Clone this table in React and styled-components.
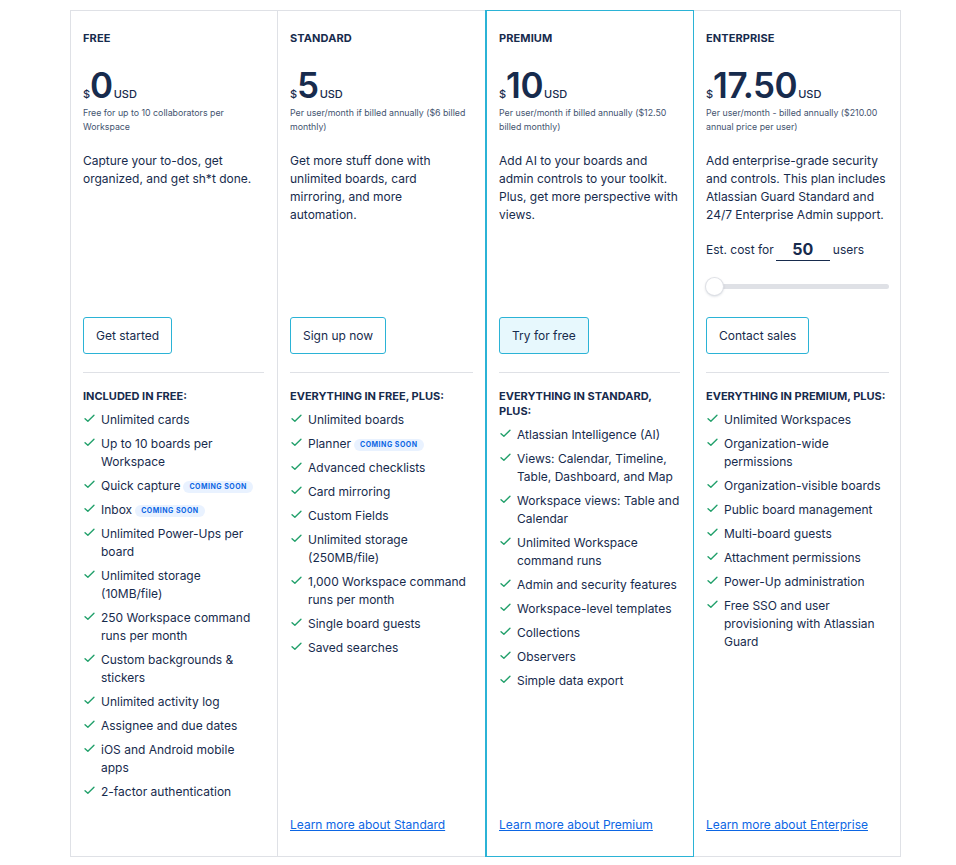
import React from 'react';
import styled, { createGlobalStyle } from 'styled-components';

const GlobalStyle = createGlobalStyle`
  body {
    margin: 0;
    background: #fff;
    font-family: 'Inter', 'Noto Sans', sans-serif;
    color: #172B4D;
  }
`;

const plans = [
  {
    name: 'FREE',
    price: '0',
    note: 'Free for up to 10 collaborators per Workspace',
    desc: 'Capture your to-dos, get organized, and get sh*t done.',
    cta: 'Get started',
    heading: 'INCLUDED IN FREE:',
    features: [
      'Unlimited cards',
      'Up to 10 boards per Workspace',
      ['Quick capture', true],
      ['Inbox', true],
      'Unlimited Power-Ups per board',
      'Unlimited storage (10MB/file)',
      '250 Workspace command runs per month',
      'Custom backgrounds & stickers',
      'Unlimited activity log',
      'Assignee and due dates',
      'iOS and Android mobile apps',
      '2-factor authentication',
    ],
  },
  {
    name: 'STANDARD',
    price: '5',
    note: 'Per user/month if billed annually ($6 billed monthly)',
    desc: 'Get more stuff done with unlimited boards, card mirroring, and more automation.',
    cta: 'Sign up now',
    heading: 'EVERYTHING IN FREE, PLUS:',
    features: [
      'Unlimited boards',
      ['Planner', true],
      'Advanced checklists',
      'Card mirroring',
      'Custom Fields',
      'Unlimited storage (250MB/file)',
      '1,000 Workspace command runs per month',
      'Single board guests',
      'Saved searches',
    ],
    link: 'Learn more about Standard',
  },
  {
    name: 'PREMIUM',
    price: '10',
    note: 'Per user/month if billed annually ($12.50 billed monthly)',
    desc: 'Add AI to your boards and admin controls to your toolkit. Plus, get more perspective with views.',
    cta: 'Try for free',
    featured: true,
    heading: 'EVERYTHING IN STANDARD, PLUS:',
    features: [
      'Atlassian Intelligence (AI)',
      'Views: Calendar, Timeline, Table, Dashboard, and Map',
      'Workspace views: Table and Calendar',
      'Unlimited Workspace command runs',
      'Admin and security features',
      'Workspace-level templates',
      'Collections',
      'Observers',
      'Simple data export',
    ],
    link: 'Learn more about Premium',
  },
  {
    name: 'ENTERPRISE',
    price: '17.50',
    note: 'Per user/month - billed annually ($210.00 annual price per user)',
    desc: 'Add enterprise-grade security and controls. This plan includes Atlassian Guard Standard and 24/7 Enterprise Admin support.',
    cta: 'Contact sales',
    estimate: true,
    heading: 'EVERYTHING IN PREMIUM, PLUS:',
    features: [
      'Unlimited Workspaces',
      'Organization-wide permissions',
      'Organization-visible boards',
      'Public board management',
      'Multi-board guests',
      'Attachment permissions',
      'Power-Up administration',
      'Free SSO and user provisioning with Atlassian Guard',
    ],
    link: 'Learn more about Enterprise',
  },
];

function Check() {
  return (
    <CheckIcon viewBox="0 0 16 16" fill="none">
      <path d="M2.5 8.2 L6 11.5 L13.5 4" stroke="#22A06B" strokeWidth="1.7" strokeLinecap="round" strokeLinejoin="round" />
    </CheckIcon>
  );
}

export default function App() {
  return (
    <>
      <GlobalStyle />
      <Page>
        <Table>
          {plans.map((p) => (
            <Card key={p.name} $featured={p.featured}>
              <Top>
                <PlanName>{p.name}</PlanName>
                <Price>
                  <Dollar>$</Dollar>
                  <Amount>{p.price}</Amount>
                  <Currency>USD</Currency>
                </Price>
                <Note>{p.note}</Note>
                <Desc>{p.desc}</Desc>
                {p.estimate && (
                  <>
                    <Estimate>
                      Est. cost for <UsersInput>50</UsersInput> users
                    </Estimate>
                    <Slider>
                      <Thumb />
                    </Slider>
                  </>
                )}
                <Spacer />
                <CtaButton $featured={p.featured}>{p.cta}</CtaButton>
              </Top>
              <Divider />
              <Heading>{p.heading}</Heading>
              <Features>
                {p.features.map((f) => {
                  const text = Array.isArray(f) ? f[0] : f;
                  const soon = Array.isArray(f);
                  return (
                    <Feature key={text}>
                      <Check />
                      <span>
                        {text}
                        {soon && <Badge>COMING SOON</Badge>}
                      </span>
                    </Feature>
                  );
                })}
              </Features>
              <LinkSlot>
                {p.link && <LearnMore href="#">{p.link}</LearnMore>}
              </LinkSlot>
            </Card>
          ))}
        </Table>
      </Page>
    </>
  );
}

const Page = styled.div`
  padding: 10px 55px 8px 70px;
`;

const Table = styled.div`
  display: grid;
  grid-template-columns: 206px 209px 207px 209px;
  border: 1px solid #DFE1E6;
`;

const Card = styled.div`
  display: flex;
  flex-direction: column;
  padding: 19px 13px 22px 12px;
  border-left: 1px solid ${(p) => (p.$featured ? '#2BB3D6' : '#DFE1E6')};
  outline: ${(p) => (p.$featured ? '1px solid #2BB3D6' : 'none')};
  position: relative;
  z-index: ${(p) => (p.$featured ? 1 : 0)};
  &:first-child {
    border-left: none;
  }
`;

const Top = styled.div`
  display: flex;
  flex-direction: column;
  height: 324px;
`;

const PlanName = styled.div`
  font-size: 11px;
  font-weight: 700;
  line-height: 16px;
  letter-spacing: 0.1px;
`;

const Price = styled.div`
  display: flex;
  align-items: baseline;
  margin-top: 19px;
  height: 40px;
`;

const Dollar = styled.span`
  font-size: 11px;
  font-weight: 500;
`;

const Amount = styled.span`
  font-size: 35px;
  font-weight: 600;
  letter-spacing: -0.5px;
  line-height: 40px;
`;

const Currency = styled.span`
  font-size: 11px;
  font-weight: 500;
  margin-left: 1px;
`;

const Note = styled.div`
  font-size: 8.8px;
  line-height: 14px;
  color: #44546F;
  margin-top: 1px;
`;

const Desc = styled.p`
  margin: 18px 0 0;
  max-width: 181px;
  font-size: 12px;
  line-height: 18px;
`;

const Estimate = styled.div`
  display: flex;
  align-items: center;
  margin-top: 14px;
  font-size: 12px;
  line-height: 22px;
`;

const UsersInput = styled.span`
  display: inline-block;
  width: 54px;
  margin: 0 3px 0 2px;
  text-align: center;
  font-size: 16px;
  font-weight: 700;
  border-bottom: 1px solid #172B4D;
`;

const Slider = styled.div`
  position: relative;
  margin-top: 23px;
  height: 5px;
  border-radius: 3px;
  background: #DFE1E6;
`;

const Thumb = styled.div`
  position: absolute;
  left: 0;
  top: -6px;
  width: 17px;
  height: 17px;
  border-radius: 50%;
  background: #fff;
  box-shadow: 0 0 0 1px #DFE1E6, 0 1px 3px rgba(9, 30, 66, 0.25);
`;

const Spacer = styled.div`
  flex: 1;
`;

const CtaButton = styled.button`
  align-self: flex-start;
  height: 37px;
  padding: 0 12px;
  border: 1px solid #2BB3D6;
  border-radius: 3px;
  background: ${(p) => (p.$featured ? '#E7F8FD' : '#fff')};
  color: #172B4D;
  font-family: inherit;
  font-size: 12px;
`;

const Divider = styled.div`
  height: 1px;
  background: #DFE1E6;
  margin: 18px 0 16px;
`;

const Heading = styled.div`
  font-size: 11px;
  font-weight: 700;
  line-height: 15px;
`;

const Features = styled.ul`
  list-style: none;
  margin: 7px 0 15px;
  padding: 0;
  display: flex;
  flex-direction: column;
  gap: 6px;
  flex: 1;
`;

const Feature = styled.li`
  display: flex;
  align-items: flex-start;
  gap: 5px;
  font-size: 12px;
  line-height: 18px;
`;

const CheckIcon = styled.svg`
  flex: none;
  width: 13px;
  height: 13px;
  margin-top: 1px;
`;

const Badge = styled.span`
  display: inline-block;
  margin-left: 3px;
  padding: 0 6px;
  border-radius: 8px;
  background: #E9F2FF;
  color: #0C66E4;
  font-size: 7px;
  font-weight: 700;
  line-height: 12px;
  letter-spacing: 0.5px;
  vertical-align: 1px;
`;

const LinkSlot = styled.div`
  min-height: 18px;
`;

const LearnMore = styled.a`
  font-size: 12px;
  line-height: 18px;
  color: #0C66E4;
  text-decoration: underline;
`;
